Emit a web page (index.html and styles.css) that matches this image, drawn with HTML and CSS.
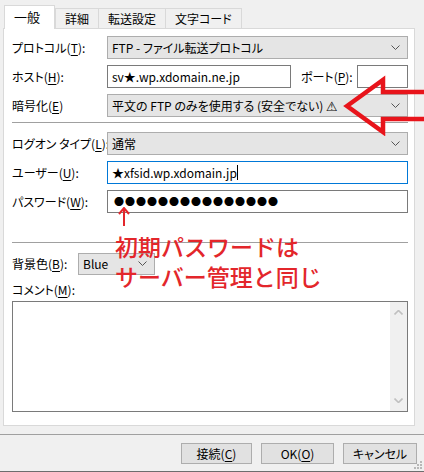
FILE: index.html
```html
<!DOCTYPE html>
<html lang="ja">
<head>
    <meta charset="UTF-8">
    <title>サイト設定</title>
    <link rel="stylesheet" href="styles.css">
</head>
<body>
<div class="tabs">
    <div class="tab active">一般</div>
    <div class="tab">詳細</div>
    <div class="tab">転送設定</div>
    <div class="tab">文字コード</div>
</div>

<div class="panel">
    <div class="row">
        <label class="label">プロトコル(<u>T</u>):</label>
        <div class="select grow">
            <span>FTP - ファイル転送プロトコル</span>
            <svg class="chev" width="9" height="5" viewBox="0 0 9 5"><polyline points="0.5,0.5 4.5,4.5 8.5,0.5"/></svg>
        </div>
    </div>
    <div class="row">
        <label class="label">ホスト(<u>H</u>):</label>
        <div class="input grow">sv★.wp.xdomain.ne.jp</div>
        <label class="port-label">ポート(<u>P</u>):</label>
        <div class="input port"></div>
    </div>
    <div class="row">
        <label class="label">暗号化(<u>E</u>)</label>
        <div class="select grow">
            <span>平文の FTP のみを使用する (安全でない) <span class="warn">⚠</span></span>
            <svg class="chev" width="9" height="5" viewBox="0 0 9 5"><polyline points="0.5,0.5 4.5,4.5 8.5,0.5"/></svg>
        </div>
    </div>

    <div class="sep first"></div>

    <div class="row">
        <label class="label">ログオン タイプ(<u>L</u>):</label>
        <div class="select grow">
            <span>通常</span>
            <svg class="chev" width="9" height="5" viewBox="0 0 9 5"><polyline points="0.5,0.5 4.5,4.5 8.5,0.5"/></svg>
        </div>
    </div>
    <div class="row">
        <label class="label">ユーザー(<u>U</u>):</label>
        <div class="input grow focus">★xfsid.wp.xdomain.jp<span class="caret"></span></div>
    </div>
    <div class="row">
        <label class="label">パスワード(<u>W</u>):</label>
        <div class="input grow dots">●●●●●●●●●●●●●●●</div>
    </div>

    <div class="sep second"></div>

    <div class="row color-row">
        <label class="label short">背景色(<u>B</u>):</label>
        <div class="select color">
            <span>Blue</span>
            <svg class="chev" width="9" height="5" viewBox="0 0 9 5"><polyline points="0.5,0.5 4.5,4.5 8.5,0.5"/></svg>
        </div>
    </div>
    <div class="comment-label">コメント(<u>M</u>):</div>
    <div class="memo">
        <div class="memo-text"></div>
        <div class="scrollbar">
            <svg width="9" height="5" viewBox="0 0 9 5"><polyline points="0.5,4.5 4.5,0.5 8.5,4.5"/></svg>
            <svg width="9" height="5" viewBox="0 0 9 5"><polyline points="0.5,0.5 4.5,4.5 8.5,0.5"/></svg>
        </div>
    </div>

    <!-- annotation drawn over the dialog -->
    <svg class="note-arrow" width="12" height="20" viewBox="0 0 12 20">
        <line x1="6" y1="1" x2="6" y2="19"/>
        <polyline points="1,7 6,1 11,7"/>
    </svg>
    <div class="note">初期パスワードは<br>サーバー管理と同じ</div>
</div>

<div class="footer">
    <button class="btn connect">接続(<u>C</u>)</button>
    <button class="btn ok">OK(<u>O</u>)</button>
    <button class="btn cancel">キャンセル</button>
</div>

<svg class="big-arrow" width="90" height="62" viewBox="0 0 90 62">
    <polygon points="7,32 43,6 43,18 92,18 92,45 43,45 43,58"/>
</svg>
<svg class="grip" width="10" height="10" viewBox="0 0 10 10">
    <rect x="7" y="1" width="2" height="2"/>
    <rect x="4" y="4" width="2" height="2"/>
    <rect x="7" y="4" width="2" height="2"/>
    <rect x="1" y="7" width="2" height="2"/>
    <rect x="4" y="7" width="2" height="2"/>
    <rect x="7" y="7" width="2" height="2"/>
</svg>
</body>
</html>
```

FILE: styles.css
```css
body {
    margin: 0;
    width: 424px;
    height: 472px;
    overflow: hidden;
    position: relative;
    background-color: #f0f0f0;
    font-family: "Noto Sans CJK JP", "Noto Sans", sans-serif;
    font-size: 12px;
    font-feature-settings: "palt";
    color: #000;
}
u {
    text-decoration: underline;
    text-underline-offset: 2px;
}

.tabs {
    display: flex;
    align-items: flex-end;
    height: 28px;
    padding-left: 4px;
}
.tab {
    height: 19px;
    line-height: 19px;
    padding: 0 9px;
    margin-left: -1px;
    border: 1px solid #d9d9d9;
    border-bottom: none;
    background-color: #f0f0f0;
}
.tab.active {
    position: relative;
    z-index: 1;
    height: 23px;
    line-height: 21px;
    width: 31px;
    margin-left: 0;
    margin-bottom: -1px;
    margin-right: 1px;
    font-size: 13px;
    background-color: #fff;
}

.panel {
    position: relative;
    box-sizing: border-box;
    width: 412px;
    height: 398px;
    margin-left: 3px;
    padding: 6px 6px 0 8px;
    background-color: #fff;
    border: 1px solid #d9d9d9;
}
.row {
    display: flex;
    align-items: center;
    height: 24px;
    margin-bottom: 5px;
}
.label {
    width: 95px;
    flex-shrink: 0;
    white-space: nowrap;
}
.label.short {
    width: 66px;
}
.grow {
    flex: 1;
}
.select, .input {
    box-sizing: border-box;
    height: 23px;
    display: flex;
    align-items: center;
    padding-left: 4px;
    white-space: nowrap;
}
.select {
    justify-content: space-between;
    padding-right: 7px;
    background-color: #e5e5e5;
    border: 1px solid #adadad;
}
.input {
    background-color: #fff;
    border: 1px solid #7a7a7a;
}
.input.focus {
    border-color: #0078d7;
}
.caret {
    display: inline-block;
    width: 1px;
    height: 15px;
    background-color: #000;
}
.dots {
    font-size: 10px;
    letter-spacing: 1px;
    padding-left: 6px;
    font-feature-settings: normal;
}
.warn {
    font-family: "DejaVu Sans", sans-serif;
    font-size: 13px;
}
.chev polyline {
    fill: none;
    stroke: #555;
    stroke-width: 1;
}
.port-label {
    width: 56px;
    margin-left: 10px;
    white-space: nowrap;
}
.input.port {
    flex: 0 0 51px;
}

.sep {
    height: 1px;
    background-color: #a0a0a0;
}
.sep.first {
    margin: 0 0 8px;
}
.sep.second {
    margin: 29px 0 9px;
}
.color-row {
    height: 23px;
}
.select.color {
    width: 77px;
    height: 22px;
}
.comment-label {
    height: 20px;
    line-height: 20px;
    margin-top: 5px;
    margin-bottom: 1px;
}
.memo {
    box-sizing: border-box;
    height: 111px;
    display: flex;
    border: 1px solid #7a7a7a;
}
.memo-text {
    flex: 1;
}
.scrollbar {
    width: 17px;
    display: flex;
    flex-direction: column;
    justify-content: space-between;
    align-items: center;
    padding: 8px 0;
    background-color: #f0f0f0;
}
.scrollbar polyline {
    fill: none;
    stroke: #c0c0c0;
    stroke-width: 1.6;
}

.note-arrow {
    position: absolute;
    left: 114px;
    top: 178px;
}
.note-arrow line, .note-arrow polyline {
    fill: none;
    stroke: #e3262b;
    stroke-width: 2;
}
.note {
    position: absolute;
    left: 111px;
    top: 202px;
    font-size: 23px;
    font-weight: 500;
    line-height: 30px;
    color: #e3262b;
    white-space: nowrap;
    font-feature-settings: normal;
}

.footer {
    display: flex;
    justify-content: flex-end;
    gap: 9px;
    margin-top: 8px;
    padding: 8px 7px 0 0;
    height: 28px;
    border-top: 1px solid #a0a0a0;
    border-bottom: 1px solid #6d6d6d;
}
.btn {
    height: 21px;
    padding: 0;
    font-family: inherit;
    font-size: 12px;
    font-feature-settings: "palt";
    color: #000;
    background-color: #e1e1e1;
    border: 1px solid #adadad;
}
.btn.connect { width: 71px; }
.btn.ok { width: 73px; }
.btn.cancel { width: 74px; }

.big-arrow {
    position: absolute;
    left: 340px;
    top: 74px;
}
.big-arrow polygon {
    fill: none;
    stroke: #e8141b;
    stroke-width: 4.5;
    stroke-linejoin: miter;
}
.grip {
    position: absolute;
    right: 1px;
    bottom: 2px;
}
.grip rect {
    fill: #b8b8b8;
}
```
